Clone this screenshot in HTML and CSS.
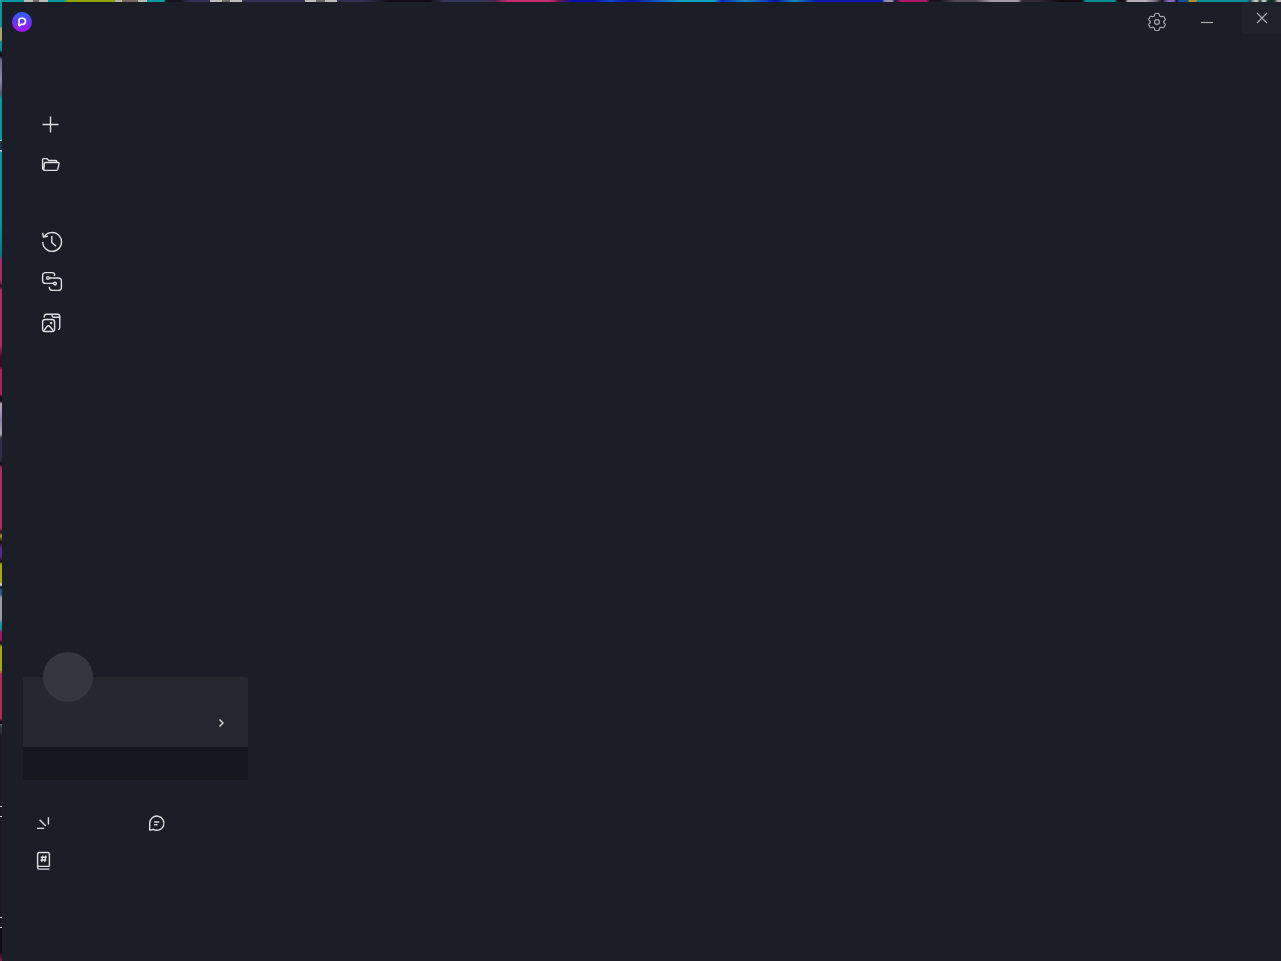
FILE: index.html
```html
<!DOCTYPE html>
<html lang="en">
<head>
  <meta charset="utf-8">
  <meta name="viewport" content="width=device-width, initial-scale=1.0">
  <title>Start</title>
  <link rel="stylesheet" href="styles.css">
</head>
<body>
  <div class="desktop-top"></div>
  <div class="desktop-left"></div>
  <div class="window">
    <header class="titlebar">
      <svg class="logo" viewBox="0 0 20 20">
        <defs>
          <linearGradient id="logo-fill" x1="0" y1="0" x2="0" y2="1">
            <stop offset="0" stop-color="#2d62ff"/>
            <stop offset="0.5" stop-color="#6537ff"/>
            <stop offset="1" stop-color="#b010f8"/>
          </linearGradient>
        </defs>
        <circle cx="10" cy="10" r="10" fill="url(#logo-fill)"/>
        <path d="M7 14.2V7.6L8.4 6.2H10.4A3 3 0 0 1 10.4 12.4H9.2L7 14.2" fill="none" stroke="#fff" stroke-width="1.6" stroke-linejoin="round"/>
      </svg>
      <div class="window-controls">
        <button class="control" type="button" aria-label="Settings">
          <svg class="icon" viewBox="0 0 24 24">
            <path d="M10.6 3.5H13.4Q14 3.5 14.2 4.2L14.6 5.9L16.2 6.8L17.8 6.3Q18.5 6.1 18.9 6.7L20.2 9Q20.5 9.6 20 10.1L18.8 11.2V12.8L20 13.9Q20.5 14.4 20.2 15L18.9 17.3Q18.5 17.9 17.8 17.7L16.2 17.2L14.6 18.1L14.2 19.8Q14 20.5 13.4 20.5H10.6Q10 20.5 9.8 19.8L9.4 18.1L7.8 17.2L6.2 17.7Q5.5 17.9 5.1 17.3L3.8 15Q3.5 14.4 4 13.9L5.2 12.8V11.2L4 10.1Q3.5 9.6 3.8 9L5.1 6.7Q5.5 6.1 6.2 6.3L7.8 6.8L9.4 5.9L9.8 4.2Q10 3.5 10.6 3.5Z"/>
            <circle cx="12" cy="12" r="2.4"/>
          </svg>
        </button>
        <button class="control" type="button" aria-label="Minimize">
          <svg class="icon" viewBox="0 0 24 24"><path d="M6 12.5H18"/></svg>
        </button>
        <button class="control close" type="button" aria-label="Close">
          <svg class="icon" viewBox="0 0 24 24"><path d="M7 7L17 17M17 7L7 17"/></svg>
        </button>
      </div>
    </header>

    <aside class="sidebar">
      <nav class="menu">
        <button class="menu-item" type="button" aria-label="New">
          <svg class="icon" viewBox="0 0 24 24"><path d="M3.5 11.5H19.5M11.5 3.5V19.5"/></svg>
        </button>
        <button class="menu-item" type="button" aria-label="Open">
          <svg class="icon" viewBox="0 0 24 24">
            <path d="M5 17.2L3.6 15.8V6.6Q3.6 5.6 4.6 5.6H7.8L9.7 7.5H16.6Q17.8 7.5 17.8 8.7V9.4M6.5 9.5H19Q20.3 9.5 20 10.8L18.8 16.2Q18.5 17.4 17.3 17.4H5.8Q4.6 17.4 4.8 16.2L5.4 10.5Q5.5 9.5 6.5 9.5Z"/>
          </svg>
        </button>
      </nav>

      <nav class="menu">
        <button class="menu-item" type="button" aria-label="Recent">
          <svg class="icon" viewBox="0 0 24 24">
            <path d="M5.2 6.8A9.4 9.4 0 1 1 3.7 12M3.7 2.8L4.4 7L8.8 6.2M12.8 6V12.5L17 16.3"/>
          </svg>
        </button>
        <button class="menu-item" type="button" aria-label="Share">
          <svg class="icon" viewBox="0 0 24 24">
            <path d="M15.6 6V4.8Q15.6 2.6 13.4 2.6H6.6Q3.6 2.6 3.6 5.6V10.4Q3.6 13.4 6.6 13.4H14.5M10.4 8H19.2Q22.4 8 22.4 11.2V17.2Q22.4 20.4 19.2 20.4H13.2Q10.4 20.4 10.4 17.6V16.8"/>
            <circle cx="9" cy="8" r="1.4"/>
            <circle cx="16" cy="13.6" r="1.4"/>
          </svg>
        </button>
        <button class="menu-item" type="button" aria-label="Gallery">
          <svg class="icon" viewBox="0 0 24 24">
            <path d="M5.4 7.5V6.2Q5.4 4.2 7.4 4.2H18.6Q20.8 4.2 20.8 6.4V17.4Q20.8 19.3 19 19.6M13 4.4V5.5Q13 7.2 14.7 7.2H20.6"/>
            <rect x="3.6" y="9.5" width="12" height="12" rx="2.6"/>
            <path d="M5 20.5L7.8 16.7Q9.4 14.8 11 16.7L14.2 20.5"/>
            <circle cx="12.2" cy="13" r="0.5"/>
          </svg>
        </button>
      </nav>

      <div class="sidebar-bottom">
        <section class="account">
          <div class="avatar"></div>
          <div class="account-info">
            <button class="account-link" type="button" aria-label="Account">
              <svg class="chevron" viewBox="0 0 12 12"><path d="M4.5 2.5L8 6L4.5 9.5"/></svg>
            </button>
          </div>
          <div class="account-plan"></div>
        </section>

        <div class="links">
          <button class="link" type="button" aria-label="Tutorials">
            <svg class="icon" viewBox="0 0 24 24"><path d="M6 17.4H13.2M8.6 8.8L14.8 15M17.4 6.2V13.4"/></svg>
          </button>
          <button class="link" type="button" aria-label="Feedback">
            <svg class="icon" viewBox="0 0 24 24">
              <path d="M5.7 19.4V12.2A7.1 7.1 0 1 1 9.2 18.3L5.7 19.4M10.2 11H15.2M10.2 13.8H13.4"/>
            </svg>
          </button>
          <button class="link" type="button" aria-label="Shortcuts">
            <svg class="icon" viewBox="0 0 24 24">
              <path d="M18.4 17.4V5Q18.4 3.5 16.9 3.5H8.1Q6.6 3.5 6.6 5V18.5Q6.6 20.1 8.2 20.1H18.4M6.8 17.4H18.4M11.7 6.5L10.7 12.8M14.7 6.5L13.7 12.8M9.8 8.3H15.8M9.4 11H15.4"/>
            </svg>
          </button>
        </div>
      </div>
    </aside>
  </div>
</body>
</html>
```
FILE: styles.css
```css
* {
  box-sizing: border-box;
  margin: 0;
  padding: 0;
}
body {
  display: grid;
  grid-template-columns: 2px 1fr;
  grid-template-rows: 2px 1fr;
  min-height: 100vh;
  background: #1b1e26;
  font-family: "Liberation Sans", sans-serif;
}

/* strips of the desktop behind the window */
.desktop-top {
  grid-column: 2;
  grid-row: 1;
  background: linear-gradient(to right,
    #009ba0 0 22px, #b9bbb5 22px 31px, #756760 31px 37px, #b9bbb5 37px 46px,
    #009ba0 46px 62px, #92a400 66px 113px, #b9b5ad 113px 120px, #756760 120px 136px, #b9bbb5 136px 145px,
    #009ba0 145px 162px, #14121d 164px 178px, #303154 188px 208px,
    #bbbcb8 208px 220px, #756c69 220px 228px, #bbbcb8 228px 240px,
    #303154 240px 303px, #bbbcb8 303px 314px, #706866 314px 323px, #bbbcb8 323px 335px,
    #303154 335px 363px, #100c15 388px 428px, #34365a 443px 483px, #54204e 493px,
    #c42c70 506px 548px, #65164b 558px, #0710a8 570px 590px, #1440d0 608px,
    #0611a5 630px, #1060c8 658px, #10a0c0 678px 712px, #0724bd 720px, #138dbd 743px,
    #1044c6 763px, #0611a5 773px, #168bbb 793px, #0819b6 813px 880px,
    #8e8ea9 883px 890px, #17133b 893px, #ad1769 899px 924px, #16121c 928px 938px,
    #4d4955 953px 973px, #a99aaa 990px 1016px, #302a38 1020px 1038px, #100b10 1058px 1080px,
    #009096 1084px 1113px, #140f18 1115px 1123px, #b8aeb8 1126px 1143px, #777080 1153px,
    #171325 1160px, #8564bd 1166px 1172px, #171325 1174px, #1152a0 1178px 1186px,
    #b88d25 1187px 1194px, #009298 1196px 1245px, #224060 1248px, #c1c9c5 1253px 1255px,
    #173b39 1258px, #c1c9c5 1261px 1263px, #153028 1266px 1272px, #b8aeb8 1276px);
}
.desktop-left {
  grid-column: 1;
  grid-row: 1 / 3;
  background: linear-gradient(to bottom,
    #009ba0 0 27px, #a9a66b 28px 40px, #008c98 42px 50px, #101016 53px 56px,
    #686a8b 60px, #888da5 80px, #535577 94px, #009ba0 98px 140px,
    #c1c9c5 140px 141px, #173544 141px 150px, #c1c9c5 150px 151px,
    #009ba0 152px 220px, #007c8c 255px, #aa2867 260px 281px, #24101e 286px, #b22a62 290px 345px,
    #3d0825 358px 366px, #b51d58 370px 394px, #100b10 397px 401px,
    #b5a6b1 404px, #8e81ab 420px, #aaa0ac 434px, #302e44 438px 460px, #100b10 464px,
    #b72a60 468px 528px, #241016 532px, #a29a13 536px, #17100e 542px,
    #60258f 548px 556px, #100b10 562px, #a8a900 564px 582px, #d0cec9 584px 585px,
    #101016 587px, #285991 590px 594px, #9d98a5 598px 619px, #0796a9 624px 629px,
    #a01462 632px 640px, #100b10 643px, #a8a900 647px 670px, #b52859 674px 718px,
    #100b10 722px 724px, #5b5c68 724px 725px, #2b3242 727px 731px, #1d1820 736px,
    #1c171e 806px, #d0cec9 806px 807px, #1c171e 807px 816px, #d0cec9 816px 817px,
    #1c171e 817px 917px, #d0cec9 917px 918px, #1c171e 918px 927px, #d0cec9 927px 928px,
    #100b10 928px 952px, #8d1848 961px);
}

.window {
  grid-column: 2;
  grid-row: 2;
  display: flex;
  flex-direction: column;
  background: #1b1e26;
}
.icon {
  display: block;
  width: 24px;
  height: 24px;
}
.icon,
.chevron {
  fill: none;
  stroke: #dededf;
  stroke-width: 1.4;
  stroke-linejoin: round;
}
button {
  display: flex;
  align-items: center;
  border: none;
  background: transparent;
  cursor: pointer;
}

/* title bar */
.titlebar {
  display: flex;
  justify-content: space-between;
  align-items: center;
  height: 40px;
  padding-left: 10px;
}
.logo {
  width: 20px;
  height: 20px;
}
.window-controls {
  display: flex;
  align-items: flex-start;
}
.control {
  justify-content: center;
  width: 50px;
  height: 40px;
}
.control .icon {
  stroke: #a8aaad;
  stroke-width: 1.2;
}
.close {
  width: 39px;
  height: 32px;
  margin-left: 10px;
  background: #1e222a;
}
.control:hover {
  background: #25292f;
}

/* sidebar */
.sidebar {
  flex: 1;
  display: flex;
  flex-direction: column;
  width: 246px;
  padding: 63px 0 81px 21px;
}
.menu {
  margin-bottom: 37px;
}
.menu-item {
  width: 100%;
  height: 40px;
  padding-left: 16px;
}
.sidebar-bottom {
  margin-top: auto;
}
.account {
  position: relative;
  margin-bottom: 24px;
}
.avatar {
  position: absolute;
  top: -25px;
  left: 20px;
  width: 50px;
  height: 50px;
  border-radius: 50%;
  background: #35373f;
}
.account-info {
  display: flex;
  justify-content: flex-end;
  align-items: flex-end;
  height: 70px;
  padding: 0 21px 18px 0;
  border-radius: 3px 3px 0 0;
  background: #25292f;
}
.chevron {
  display: block;
  width: 12px;
  height: 12px;
}
.account-plan {
  height: 33px;
  border-radius: 0 0 3px 3px;
  background: #14171e;
}
.links {
  display: grid;
  grid-template-columns: 1fr 1fr;
}
.link {
  height: 38px;
  padding-left: 8px;
}
```
